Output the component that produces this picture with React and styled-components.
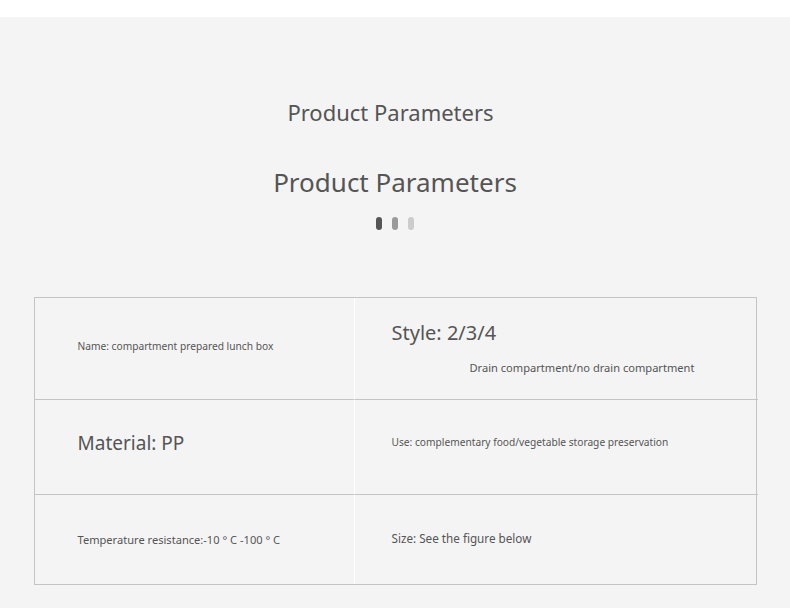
import React from "react";
import styled, { createGlobalStyle } from "styled-components";

const GlobalStyle = createGlobalStyle`
  html, body {
    margin: 0;
    padding: 0;
    background: #ffffff;
  }
  body {
    font-family: "Noto Sans", "Open Sans", sans-serif;
    color: #555555;
  }
`;

const Page = styled.div`
  width: 790px;
  height: 608px;
  overflow: hidden;
  padding-top: 17px;
  box-sizing: border-box;
`;

const Section = styled.section`
  background: #f4f4f4;
  height: 591px;
  display: flex;
  flex-direction: column;
  align-items: center;
`;

const Title = styled.h2`
  margin: 81px 9px 0 0;
  font-size: 22px;
  font-weight: 400;
  line-height: 28px;
  color: #555555;
`;

const SubTitle = styled.h3`
  margin: 39px 0 0;
  font-size: 26px;
  font-weight: 400;
  line-height: 34px;
  color: #555555;
`;

const Dots = styled.div`
  display: flex;
  gap: 10px;
  margin-top: 18px;
`;

const Dot = styled.span`
  width: 6px;
  height: 13px;
  border-radius: 3px;
  background: ${(p) => p.$color};
`;

const Table = styled.div`
  margin-top: 67px;
  width: 723px;
  height: 288px;
  display: grid;
  grid-template-columns: 319px 404px;
  grid-template-rows: 101px 95px 90px;
  border: 1px solid #c4c4c4;
  box-sizing: border-box;
`;

const Cell = styled.div`
  display: flex;
  flex-direction: column;
  justify-content: center;
  padding-left: ${(p) => (p.$right ? "37px" : "43px")};
  padding-top: ${(p) => p.$pt || "0"};
  padding-bottom: ${(p) => p.$pb || "0"};
  border-left: ${(p) => (p.$right ? "1px solid #ffffff" : "none")};
  border-top: ${(p) => (p.$first ? "none" : "1px solid #c4c4c4")};
  box-sizing: border-box;
  color: #555555;
`;

const Small = styled.div`
  font-size: ${(p) => p.$size || "10.2px"};
  line-height: 16px;
  padding-left: ${(p) => p.$indent || "0"};
  margin-top: ${(p) => p.$gap || "0"};
`;

const Big = styled.div`
  font-size: ${(p) => p.$size || "19px"};
  line-height: 24px;
`;

export default function App() {
  return (
    <>
      <GlobalStyle />
      <Page>
        <Section>
          <Title>Product Parameters</Title>
          <SubTitle>Product Parameters</SubTitle>
          <Dots>
            <Dot $color="#555555" />
            <Dot $color="#9a9a9a" />
            <Dot $color="#cccccc" />
          </Dots>
          <Table>
            <Cell $first $pb="5px">
              <Small>Name: compartment prepared lunch box</Small>
            </Cell>
            <Cell $first $right>
              <Big $size="20px">Style: 2/3/4</Big>
              <Small $size="11.1px" $indent="78px" $gap="15px">
                Drain compartment/no drain compartment
              </Small>
            </Cell>
            <Cell $pb="9px">
              <Big>Material: PP</Big>
            </Cell>
            <Cell $right $pb="11px">
              <Small>Use: complementary food/vegetable storage preservation</Small>
            </Cell>
            <Cell>
              <Small $size="11.1px">Temperature resistance:-10 ° C -100 ° C</Small>
            </Cell>
            <Cell $right $pb="3px">
              <Small $size="11.7px">Size: See the figure below</Small>
            </Cell>
          </Table>
        </Section>
      </Page>
    </>
  );
}
